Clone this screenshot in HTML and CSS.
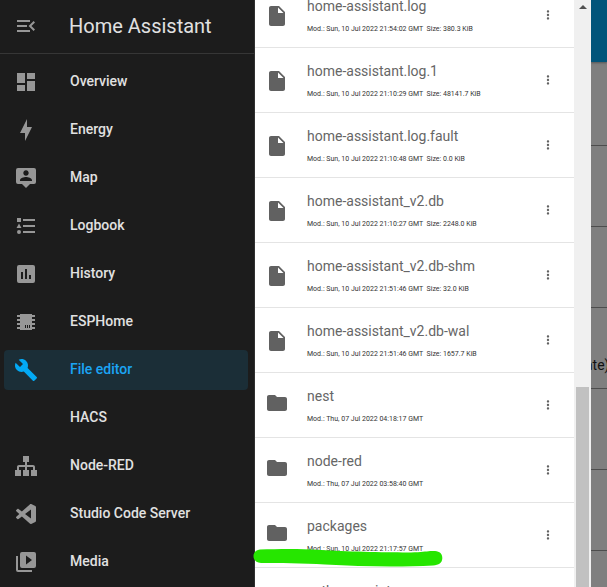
FILE: index.html
```html
<!DOCTYPE html>
<html lang="en">
<head>
<meta charset="utf-8">
<title>Home Assistant</title>
<link rel="stylesheet" href="styles.css">
</head>
<body>
<div class="app">
  <aside class="sidebar">
    <header class="sidebar-header">
      <button class="menu-button" type="button" aria-label="Toggle sidebar"><svg class="icon" viewBox="0 0 24 24"><path d="M21,15.61L19.59,17L14.58,12L19.59,7L21,8.39L17.44,12L21,15.61M3,6H16V8H3V6M3,13V11H13V13H3M3,18V16H16V18H3Z"/></svg></button>
      <h1 class="title">Home Assistant</h1>
    </header>
    <nav class="nav">
      <a class="nav-item" href="#"><svg class="icon" viewBox="0 0 24 24"><path d="M13,3V9H21V3M13,21H21V11H13M3,21H11V15H3M3,13H11V3H3V13Z"/></svg>Overview</a>
      <a class="nav-item" href="#"><svg class="icon" viewBox="0 0 24 24"><path d="M11 15H6L13 1V9H18L11 23V15Z"/></svg>Energy</a>
      <a class="nav-item" href="#"><svg class="icon" viewBox="0 0 24 24"><path d="M20,2H4A2,2 0 0,0 2,4V16A2,2 0 0,0 4,18H8L12,22L16,18H20A2,2 0 0,0 22,16V4A2,2 0 0,0 20,2M12,4.3C13.5,4.3 14.7,5.5 14.7,7C14.7,8.5 13.5,9.7 12,9.7C10.5,9.7 9.3,8.5 9.3,7C9.3,5.5 10.5,4.3 12,4.3M18,15H6V14.1C6,12.1 10,11 12,11C14,11 18,12.1 18,14.1V15Z"/></svg>Map</a>
      <a class="nav-item" href="#"><svg class="icon" viewBox="0 0 24 24"><path d="M5,9.5L7.5,14H2.5L5,9.5M3,4H7V8H3V4M5,20A2,2 0 0,0 7,18A2,2 0 0,0 5,16A2,2 0 0,0 3,18A2,2 0 0,0 5,20M9,5V7H21V5H9M9,19H21V17H9V19M9,11V13H21V11H9Z"/></svg>Logbook</a>
      <a class="nav-item" href="#"><svg class="icon" viewBox="0 0 24 24"><path d="M19,3H5A2,2 0 0,0 3,5V19A2,2 0 0,0 5,21H19A2,2 0 0,0 21,19V5A2,2 0 0,0 19,3M9,17H7V10H9V17M13,17H11V7H13V17M17,17H15V13H17V17Z"/></svg>History</a>
      <a class="nav-item" href="#"><svg class="icon" viewBox="0 0 24 24"><path d="M6,4H18V5H21V7H18V9H21V11H18V13H21V15H18V17H21V19H18V20H6V19H3V17H6V15H3V13H6V11H3V9H6V7H3V5H6V4M11,15V18H12V15H11M13,15V18H14V15H13M15,15V18H16V15H15Z"/></svg>ESPHome</a>
      <a class="nav-item selected" href="#" aria-current="page"><svg class="icon" viewBox="0 0 24 24"><path d="M22.7,19L13.6,9.9C14.5,7.6 14,4.9 12.1,3C10.1,1 7.1,0.6 4.7,1.7L9,6L6,9L1.6,4.7C0.4,7.1 0.9,10.1 2.9,12.1C4.8,14 7.5,14.5 9.8,13.6L18.9,22.7C19.3,23.1 19.9,23.1 20.3,22.7L22.6,20.4C23.1,20 23.1,19.3 22.7,19Z"/></svg>File editor</a>
      <a class="nav-item" href="#"><svg class="icon" viewBox="0 0 24 24"></svg>HACS</a>
      <a class="nav-item" href="#"><svg class="icon" viewBox="0 0 24 24"><path d="M9,2V8H11V11H5C3.89,11 3,11.89 3,13V16H1V22H7V16H5V13H11V16H9V22H15V16H13V13H19V16H17V22H23V16H21V13C21,11.89 20.11,11 19,11H13V8H15V2H9Z"/></svg>Node-RED</a>
      <a class="nav-item" href="#"><svg class="icon" viewBox="0 0 24 24"><path d="M21.3 4.1L17.2 2.1C16.7 1.9 16.1 2 15.8 2.4L7.9 9.5L4.5 6.9C4.2 6.7 3.7 6.7 3.4 7L2.3 8C1.9 8.3 1.9 8.9 2.3 9.2L5.3 12L2.3 14.8C1.9 15.1 1.9 15.7 2.3 16L3.4 17C3.7 17.3 4.2 17.3 4.5 17.1L7.9 14.5L15.8 21.6C16.1 22 16.7 22.1 17.2 21.9L21.3 19.9C21.7 19.7 22 19.3 22 18.8V5.2C22 4.7 21.7 4.3 21.3 4.1M17 16.5L11 12L17 7.5Z"/></svg>Studio Code Server</a>
      <a class="nav-item" href="#"><svg class="icon" viewBox="0 0 24 24"><path d="M4,6H2V20A2,2 0 0,0 4,22H18V20H4V6M20,2H8A2,2 0 0,0 6,4V16A2,2 0 0,0 8,18H20A2,2 0 0,0 22,16V4A2,2 0 0,0 20,2M12,14.5V5.5L18,10L12,14.5Z"/></svg>Media</a>
    </nav>
  </aside>

  <main class="drawer">
    <ul class="files" id="files"></ul>
    <div class="scrollbar"><span class="scroll-arrow"></span><span class="scroll-thumb"></span></div>
  </main>

  <div class="backdrop">
    <div class="toolbar"></div>
    <div class="line"></div>
    <div class="line"></div>
    <div class="line"></div>
    <div class="line"><span class="line-text">ate)</span></div>
    <div class="line"></div>
    <div class="line"></div>
    <div class="line"></div>
  </div>

  <svg class="marker" viewBox="0 0 190 18"><path d="M7 0.5C25 0 48 -0.3 64 0.8C90 2.6 145 4 165 3.2C173 2.6 177 1.8 182 2C187 2.4 189.5 5 189.3 9.5C189 14 186 16 180 16.5C150 18 110 17.8 72 15.5C50 14 25 14.2 8 14C3 13.6 0.5 11 0.5 7C0.5 3.5 3 1 7 0.5Z"/></svg>
</div>
<script src="files.js"></script>
</body>
</html>
```
FILE: styles.css
```css
* { box-sizing: border-box; }

body {
  margin: 0;
  font-family: Roboto, "Liberation Sans", sans-serif;
  background: #7f7f7f;
}

button {
  padding: 0;
  border: 0;
  background: none;
  color: inherit;
}

.app {
  position: relative;
  display: flex;
  height: 100vh;
  overflow: hidden;
}

/* Sidebar */
.sidebar {
  flex: 0 0 255px;
  background: #1c1c1c;
  border-right: 1px solid #303030;
}

.icon {
  display: block;
  flex: none;
  width: 24px;
  height: 24px;
  fill: #979797;
  fill-rule: evenodd;
}

.sidebar-header {
  display: flex;
  align-items: flex-start;
  gap: 31px;
  height: 54px;
  padding: 14px 0 0 14px;
  border-bottom: 1px solid #363636;
}

.title {
  margin: 0;
  font-size: 20px;
  line-height: 24px;
  font-weight: 400;
  color: #e1e1e1;
}

.nav {
  display: flex;
  flex-direction: column;
  gap: 8px;
  padding: 8px 6px 0 4px;
}

.nav-item {
  display: flex;
  align-items: flex-start;
  gap: 32px;
  height: 40px;
  padding: 8px 0 0 10px;
  border-radius: 4px;
  font-size: 14px;
  line-height: 22px;
  font-weight: 500;
  color: #e1e1e1;
  text-decoration: none;
}

.selected {
  background: #1b2e37;
  color: #1ba5f5;
}

.selected .icon { fill: #03a9f4; }

/* File list */
.drawer {
  display: flex;
  flex: 0 0 336px;
  background: #fff;
}

.files {
  flex: 1;
  margin: -17px 0 0;
  padding: 0;
  list-style: none;
}

.file {
  display: flex;
  align-items: flex-start;
  height: 65px;
  padding: 0 19px 0 10px;
  border-bottom: 1px solid #e4e4e4;
}

.file .icon { fill: #616161; }

.icon.document { margin-top: 21px; }

.icon.folder { margin-top: 18px; }

.info {
  flex: 1;
  padding: 13px 0 0 18px;
  color: #666;
}

.name {
  display: block;
  font-size: 14px;
  line-height: 20px;
}

.meta {
  display: block;
  margin-top: 8px;
  font-size: 7px;
  line-height: 10px;
  color: #333;
  white-space: pre;
}

.more { margin-top: 25px; }

.file .more .icon {
  width: 14px;
  height: 14px;
}

.scrollbar {
  display: flex;
  flex-direction: column;
  flex: 0 0 17px;
  align-items: center;
  justify-content: space-between;
  background: #f0f0f0;
}

.scroll-arrow {
  margin-top: 5px;
  border: 4px solid transparent;
  border-top-width: 0;
  border-bottom-color: #505050;
}

.scroll-thumb {
  width: 13px;
  height: 34%;
  background: #c1c1c1;
}

/* Dimmed page behind the drawer */
.backdrop {
  flex: 1;
  min-width: 0;
  overflow: hidden;
  background: #7f7f7f;
}

.toolbar {
  height: 62px;
  margin-bottom: 3px;
  background: #01547a;
  box-shadow: 0 1px 2px #555;
}

.line {
  display: flex;
  align-items: flex-end;
  height: 81px;
  padding-bottom: 13px;
  border-bottom: 1px solid #4d4d4d;
}

.line-text {
  margin-left: -6px;
  font-size: 14px;
  line-height: 20px;
  color: #111;
}

.marker {
  position: absolute;
  left: 253px;
  top: 549px;
  width: 190px;
  height: 18px;
  fill: #26e600;
}
```
FILE: files.js
```js
const entries = [
  ["document", "home-assistant.log", "Sun, 10 Jul 2022 21:54:02 GMT", "380.3 KiB"],
  ["document", "home-assistant.log.1", "Sun, 10 Jul 2022 21:10:29 GMT", "48141.7 KiB"],
  ["document", "home-assistant.log.fault", "Sun, 10 Jul 2022 21:10:48 GMT", "0.0 KiB"],
  ["document", "home-assistant_v2.db", "Sun, 10 Jul 2022 21:10:27 GMT", "2248.0 KiB"],
  ["document", "home-assistant_v2.db-shm", "Sun, 10 Jul 2022 21:51:46 GMT", "32.0 KiB"],
  ["document", "home-assistant_v2.db-wal", "Sun, 10 Jul 2022 21:51:46 GMT", "1657.7 KiB"],
  ["folder", "nest", "Thu, 07 Jul 2022 04:18:17 GMT"],
  ["folder", "node-red", "Thu, 07 Jul 2022 03:58:40 GMT"],
  ["folder", "packages", "Sun, 10 Jul 2022 21:17:57 GMT"],
  ["folder", "python_scripts", ""]
];

const shapes = {
  document: "M6 2c-1.1 0-2 .9-2 2v16c0 1.1.9 2 2 2h12c1.1 0 2-.9 2-2V8l-6-6H6zm7 7V3.5L18.5 9H13z",
  folder: "M10 4H4c-1.1 0-2 .9-2 2v12c0 1.1.9 2 2 2h16c1.1 0 2-.9 2-2V8c0-1.1-.9-2-2-2h-8l-2-2z"
};

const dots = "M12 8c1.1 0 2-.9 2-2s-.9-2-2-2-2 .9-2 2 .9 2 2 2zm0 2c-1.1 0-2 .9-2 2s.9 2 2 2 2-.9 2-2-.9-2-2-2zm0 6c-1.1 0-2 .9-2 2s.9 2 2 2 2-.9 2-2-.9-2-2-2z";

document.getElementById("files").innerHTML = entries.map(([kind, name, date, size]) => `
  <li class="file">
    <svg class="icon ${kind}" viewBox="0 0 24 24"><path d="${shapes[kind]}"/></svg>
    <div class="info">
      <span class="name">${name}</span>
      <span class="meta">${date ? "Mod.: " + date : ""}${size ? "  Size: " + size : ""}</span>
    </div>
    <button class="more" type="button" aria-label="Options for ${name}"><svg class="icon" viewBox="0 0 24 24"><path d="${dots}"/></svg></button>
  </li>`).join("");
```
